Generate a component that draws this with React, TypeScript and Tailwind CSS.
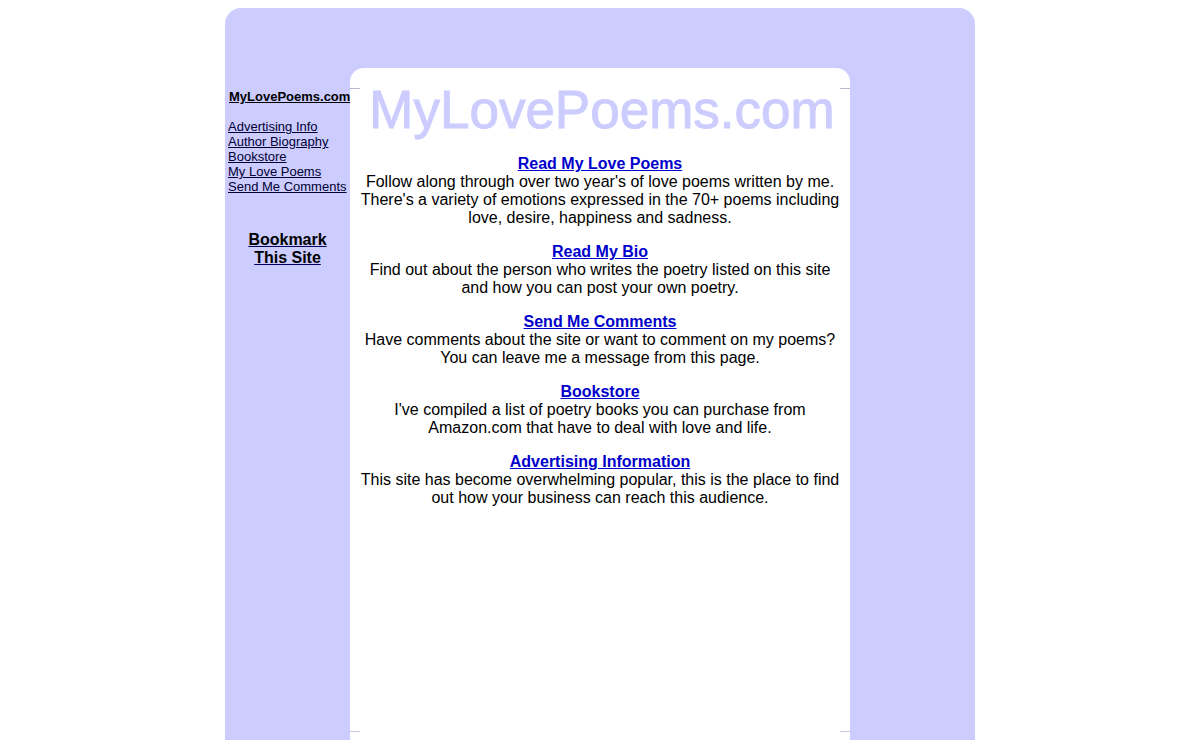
const sideLinks = ['Advertising Info', 'Author Biography', 'Bookstore', 'My Love Poems', 'Send Me Comments']

const sections = [
  {
    title: 'Read My Love Poems',
    lines: [
      'Follow along through over two year\'s of love poems written by me.',
      'There\'s a variety of emotions expressed in the 70+ poems including',
      'love, desire, happiness and sadness.',
    ],
  },
  {
    title: 'Read My Bio',
    lines: ['Find out about the person who writes the poetry listed on this site', 'and how you can post your own poetry.'],
  },
  {
    title: 'Send Me Comments',
    lines: ['Have comments about the site or want to comment on my poems?', 'You can leave me a message from this page.'],
  },
  {
    title: 'Bookstore',
    lines: ['I\'ve compiled a list of poetry books you can purchase from', 'Amazon.com that have to deal with love and life.'],
  },
  {
    title: 'Advertising Information',
    lines: [
      'This site has become overwhelming popular, this is the place to find',
      'out how your business can reach this audience.',
    ],
  },
]

export default function App() {
  return (
    <div className="min-h-[740px] overflow-hidden bg-white pt-2 font-['Liberation_Sans',Arial,sans-serif] text-black">
      <div className="mx-auto flex h-[760px] w-[750px] rounded-t-[16px] bg-[#ccccff] pt-[60px]">
        <div className="w-[125px] shrink-0 pt-[21px] pl-[3px] text-[13px] leading-[15px]">
          <a href="#" className="pl-px font-bold text-black underline">MyLovePoems.com</a>
          <div className="mt-[15px] flex flex-col">
            {sideLinks.map((l) => (
              <a key={l} href="#" className="text-[#000033] underline">
                {l}
              </a>
            ))}
          </div>
          <div className="mt-[37px] pr-[3px] text-center text-base leading-[18px] font-bold">
            <a href="#" className="text-black underline decoration-[#000066]">
              Bookmark
              <br />
              This Site
            </a>
          </div>
        </div>

        <div className="relative w-[500px] shrink-0 rounded-t-[14px] bg-white">
          <div className="absolute top-[20px] left-0 h-px w-[10px] bg-[#b8b8d0]" />
          <div className="absolute top-[20px] right-0 h-px w-[10px] bg-[#b8b8d0]" />
          <div className="absolute top-[663px] left-0 h-px w-[10px] bg-[#c8c8d8]" />
          <div className="absolute top-[663px] right-0 h-px w-[10px] bg-[#c8c8d8]" />
          <h1 className="pt-[11px] pl-[4px] text-center text-[53px] leading-[61px] font-normal text-[#ccccff] [-webkit-text-stroke:1px_#ccccff]">
            MyLovePoems.com
          </h1>
          <div className="mt-[15px] flex flex-col gap-4 px-[10px] text-center text-base leading-[18px]">
            {sections.map((s) => (
              <div key={s.title}>
                <a href="#" className="font-bold text-[#0000cc] underline">
                  {s.title}
                </a>
                {s.lines.map((line) => (
                  <div key={line} className="whitespace-nowrap">
                    {line}
                  </div>
                ))}
              </div>
            ))}
          </div>
        </div>

        <div className="w-[125px] shrink-0" />
      </div>
    </div>
  )
}
